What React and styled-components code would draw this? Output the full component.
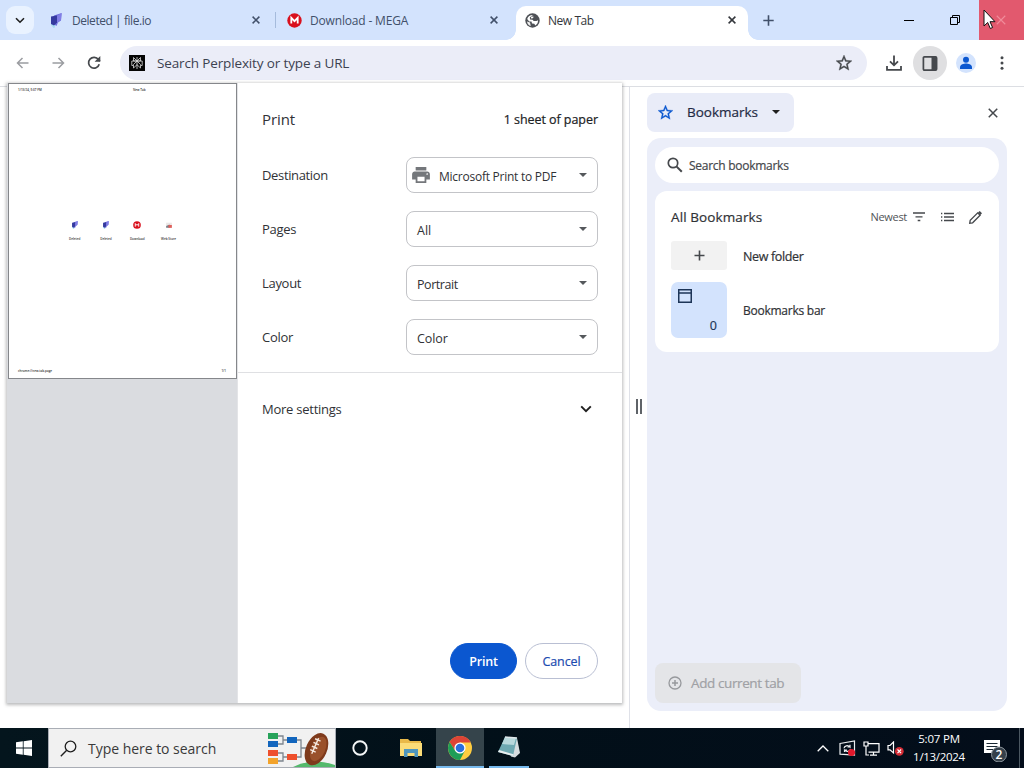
import React from "react";
import styled, { createGlobalStyle } from "styled-components";

const Global = createGlobalStyle`
  * { box-sizing: border-box; }
  html, body { margin: 0; padding: 0; overflow: hidden; }
  body { font-family: "Open Sans", "Noto Sans", sans-serif; font-size: 12px; color: #202124; }
  svg { display: block; flex: none; }
  button { font: inherit; border: 0; padding: 0; background: none; }
`;

const Desktop = styled.div`
  position: relative;
  width: 1024px;
  height: 768px;
  display: flex;
  flex-direction: column;
  background: #fff;
  overflow: hidden;
`;

const T = styled.span`
  white-space: nowrap;
  font-size: ${(p) => p.$size || 12.5}px;
  font-weight: ${(p) => p.$weight || 400};
  letter-spacing: ${(p) => p.$ls || 0}px;
  color: ${(p) => p.$color || "#303236"};
  line-height: 18px;
  padding-top: ${(p) => p.$drop || 0}px;
  ${(p) => p.$medium && "-webkit-text-stroke: 0.2px currentColor;"}
`;

/* ---------- tab strip ---------- */
const TabStrip = styled.div`
  height: 40px;
  flex: none;
  display: flex;
  background: #d3e3fd;
`;
const TabSearch = styled.button`
  width: 28px;
  height: 28px;
  margin: 6px 7px 0 6px;
  border-radius: 9px;
  background: #e9f2ff;
  display: grid;
  place-items: center;
`;
const Tab = styled.div`
  position: relative;
  width: ${(p) => p.$w}px;
  height: ${(p) => (p.$active ? 34 : 40)}px;
  margin-top: ${(p) => (p.$active ? 6 : 0)}px;
  padding: 0 ${(p) => p.$pr}px ${(p) => (p.$active ? 6 : 0)}px ${(p) => p.$pl}px;
  display: flex;
  align-items: center;
  gap: 8px;
  background: ${(p) => (p.$active ? "#fff" : "transparent")};
  border-radius: 10px 10px 0 0;
  ${(p) => p.$active && `
    &::before, &::after { content: ""; position: absolute; bottom: 0; width: 10px; height: 10px; }
    &::before { left: -10px; background: radial-gradient(circle at 0 0, transparent 9.5px, #fff 10px); }
    &::after { right: -10px; background: radial-gradient(circle at 100% 0, transparent 9.5px, #fff 10px); }
  `}
`;
const TabTitle = styled(T)`flex: 1;`;
const Separator = styled.div`
  width: 1px;
  height: 16px;
  margin-top: 12px;
  background: #a5bbdc;
`;
const NewTab = styled.button`
  width: 41px;
  height: 40px;
  display: grid;
  place-items: center;
`;
const WindowButtons = styled.div`
  margin-left: auto;
  display: flex;
`;
const WindowButton = styled.button`
  width: ${(p) => (p.$close ? 45 : 46)}px;
  height: 40px;
  padding-right: ${(p) => (p.$close ? 1 : 2)}px;
  display: grid;
  place-items: center;
  background: ${(p) => (p.$close ? "#e2596e" : "transparent")};
`;
const Cursor = styled.svg`
  position: absolute;
  left: 983px;
  top: 9px;
`;

/* ---------- toolbar ---------- */
const Toolbar = styled.div`
  height: 47px;
  flex: none;
  display: flex;
  align-items: flex-start;
  padding: 6px 4px 0 4px;
  border-bottom: 1px solid #dcdee3;
  background: #fff;
`;
const ToolButton = styled.button`
  width: ${(p) => p.$w || 36}px;
  height: 34px;
  margin-left: ${(p) => (p.$on ? 1 : 0)}px;
  display: grid;
  place-items: center;
  border-radius: 17px;
  background: ${(p) => (p.$on ? "#dfdfe1" : "transparent")};
`;
const Omnibox = styled.div`
  width: 747px;
  height: 34px;
  margin: 0 9px 0 8px;
  border-radius: 17px;
  background: #ebedf8;
  display: flex;
  align-items: center;
  padding: 0 15px 0 9px;
  gap: 12px;
`;

/* ---------- content ---------- */
const Content = styled.div`
  flex: 1;
  display: flex;
  min-height: 0;
`;
const PageArea = styled.div`width: 629px;`;
const SidePanel = styled.div`
  flex: 1;
  border-left: 1px solid #dfe1e8;
  display: flex;
`;
const ResizeHandle = styled.div`
  width: 17px;
  padding-top: 312px;
  display: flex;
  justify-content: center;
  gap: 2px;
  &::before, &::after { content: ""; width: 2px; height: 15px; background: #5f6368; }
`;
const SideColumn = styled.div`width: 360px;`;
const SideHeader = styled.div`
  height: 51px;
  padding-top: 6px;
  display: flex;
  justify-content: space-between;
  align-items: flex-start;
`;
const PanelPicker = styled.button`
  width: 147px;
  height: 39px;
  padding: 0 14px 1px 11px;
  border-radius: 8px;
  background: #e9ecf8;
  display: flex;
  align-items: center;
  justify-content: space-between;
`;
const CloseSide = styled.button`
  width: 28px;
  height: 39px;
  display: grid;
  place-items: center;
`;
const SideBody = styled.div`
  height: 573px;
  border-radius: 14px;
  background: #ebeef9;
  padding: 9px 8px 8px;
  display: flex;
  flex-direction: column;
`;
const SearchField = styled.div`
  height: 36px;
  border-radius: 18px;
  background: #fff;
  display: flex;
  align-items: center;
  gap: 6px;
  padding-left: 12px;
`;
const BookmarkCard = styled.div`
  margin-top: 8px;
  height: 161px;
  border-radius: 12px;
  background: #fff;
  padding: 11px 16px;
`;
const CardHeader = styled.div`
  display: flex;
  align-items: center;
  height: 30px;
`;
const SortGroup = styled.div`
  margin-left: auto;
  display: flex;
  align-items: center;
  gap: 4px;
`;
const ListIconGap = styled.div`margin-left: 10px;`;
const EditIconGap = styled.div`margin-left: 10px;`;
const BookmarkRow = styled.div`
  display: flex;
  align-items: center;
  gap: 16px;
  height: ${(p) => p.$h}px;
  margin-top: ${(p) => p.$mt}px;
`;
const NewFolderTile = styled.div`
  width: 56px;
  height: 29px;
  border-radius: 3px;
  background: #f2f2f2;
  display: grid;
  place-items: center;
`;
const FolderTile = styled.div`
  width: 56px;
  height: 56px;
  border-radius: 7px;
  background: #d3e3fd;
  padding: 6px 10px 3px 6px;
  display: flex;
  flex-direction: column;
  justify-content: space-between;
`;
const Count = styled(T)`align-self: flex-end;`;
const AddTab = styled.button`
  margin-top: auto;
  width: 146px;
  height: 40px;
  border-radius: 8px;
  background: #e4e5e8;
  display: flex;
  align-items: center;
  gap: 9px;
  padding-left: 13px;
`;

/* ---------- print dialog ---------- */
const Dialog = styled.div`
  position: absolute;
  left: 7px;
  top: 83px;
  width: 615px;
  height: 620px;
  display: flex;
  background: #fff;
  box-shadow: 0 1px 3px 1px rgba(60, 64, 67, 0.35);
`;
const Preview = styled.div`
  width: 231px;
  padding-left: 1px;
  background: #dadce0;
  border-right: 1px solid #e3e4e7;
`;
const Sheet = styled.div`
  width: 229px;
  height: 296px;
  background: #fff;
  border: 1px solid #85878b;
  padding: 3px 10px 4px 9px;
  display: flex;
  flex-direction: column;
  justify-content: space-between;
`;
const SheetLine = styled.div`
  display: flex;
  height: 6px;
  align-items: center;
`;
const Micro = styled.span`
  font-size: 3px;
  line-height: 5px;
  font-weight: 600;
  color: #333;
  white-space: nowrap;
  width: ${(p) => (p.$w ? p.$w + "px" : "auto")};
`;
const Shortcuts = styled.div`
  display: flex;
  padding: 2px 0 0 41px;
`;
const Shortcut = styled.div`
  width: 31.3px;
  display: flex;
  flex-direction: column;
  align-items: center;
  justify-content: space-between;
  height: 21px;
`;
const Settings = styled.div`
  flex: 1;
  display: flex;
  flex-direction: column;
`;
const DialogHeader = styled.div`
  height: 65px;
  padding: 7px 24px 0 24px;
  display: flex;
  align-items: center;
  justify-content: space-between;
`;
const SettingRow = styled.div`
  height: 54px;
  padding: 0 24px;
  display: flex;
  align-items: center;
  justify-content: space-between;
`;
const Select = styled.div`
  width: 192px;
  height: 36px;
  border: 1px solid #c3c4c8;
  border-radius: 8px;
  display: flex;
  align-items: center;
  padding: 2px 10px 0 ${(p) => (p.$icon ? 5 : 10)}px;
  gap: 9px;
`;
const SelectValue = styled(T)`flex: 1;`;
const ArrowSlot = styled.div`margin-bottom: 3px;`;
const IconSlot = styled.div`margin-bottom: 3px;`;
const MoreSettings = styled.div`
  margin-top: 8px;
  height: 75px;
  border-top: 1px solid #dfe0e3;
  padding: 0 30px 2px 24px;
  display: flex;
  align-items: center;
  justify-content: space-between;
`;
const Buttons = styled.div`
  margin-top: auto;
  padding: 0 24px 24px 0;
  display: flex;
  justify-content: flex-end;
  gap: 8px;
`;
const PillButton = styled.button`
  height: 36px;
  width: ${(p) => (p.$primary ? 67 : 73)}px;
  border-radius: 18px;
  border: 1px solid ${(p) => (p.$primary ? "#0b57d0" : "#b9bfd3")};
  background: ${(p) => (p.$primary ? "#0b57d0" : "#fff")};
  display: flex;
  align-items: center;
  justify-content: center;
`;

/* ---------- taskbar ---------- */
const Taskbar = styled.div`
  height: 40px;
  flex: none;
  display: flex;
  background: linear-gradient(90deg, #04151d 0%, #021019 45%, #030d1a 100%);
`;
const TaskItem = styled.div`
  width: 48px;
  height: 40px;
  margin-right: ${(p) => p.$mr || 0}px;
  display: grid;
  place-items: center;
  background: ${(p) => (p.$active ? "#35444b" : "transparent")};
  box-shadow: ${(p) => (p.$active ? "inset 0 -2px #76b9ed" : "none")};
`;
const RunningMark = styled.div`
  width: 40px;
  height: 40px;
  margin-left: 5px;
  border-bottom: 2px solid #76b9ed;
  display: grid;
  place-items: center;
`;
const TaskSearch = styled.div`
  width: 288px;
  height: 40px;
  background: #f1f1f1;
  border: 1px solid #a9adb5;
  display: flex;
  align-items: center;
  padding-left: 11px;
  gap: 11px;
`;
const SearchArt = styled.div`
  margin-left: auto;
  align-self: flex-end;
`;
const Tray = styled.div`
  margin-left: auto;
  display: flex;
  align-items: center;
`;
const TrayIcon = styled.div`
  width: 24px;
  display: grid;
  place-items: center;
`;
const Clock = styled.div`
  width: 64px;
  display: flex;
  flex-direction: column;
  align-items: center;
`;
const Notifications = styled(TaskItem)`padding-top: 4px;`;
const ShowDesktop = styled.div`
  width: 5px;
  height: 40px;
  border-left: 1px solid #4b5761;
`;

const CloseX = ({ c = "#41506a", s = 8, w = 1.5 }) => (
  <svg width={s} height={s} viewBox="0 0 8 8"><path d="M.6.6l6.8 6.8M7.4.6L.6 7.4" stroke={c} strokeWidth={w} /></svg>
);
const Chevron = ({ c = "#1f1f1f", w = 10 }) => (
  <svg width={w} height={w * 0.7} viewBox="0 0 10 7"><path d="M1 1.2l4 4 4-4" fill="none" stroke={c} strokeWidth="1.6" /></svg>
);
const Caret = ({ c = "#55585c", w = 8 }) => (
  <svg width={w} height={w / 2} viewBox="0 0 8 4"><path d="M0 0h8L4 4z" fill={c} /></svg>
);
const FileIo = ({ s = 15 }) => (
  <svg width={s} height={s} viewBox="0 0 15 15">
    <path d="M2 5l4-1v10.500L4.500 15 2 12z" fill="#a9dcf0" />
    <path d="M5 2.500L12.700 0 12 7.500 9 9.500 7.500 13 3 10z" fill="#6f70dc" />
    <path d="M2 3.500l6-1v7L5 12.500 2 11z" fill="#353a9f" />
    <path d="M8 3L12.500 0 12 6.500 8 10z" fill="#827ee6" />
  </svg>
);
const Mega = ({ s = 15 }) => (
  <svg width={s} height={s} viewBox="0 0 15 15">
    <circle cx="7.500" cy="7.500" r="7.200" fill="#d9101d" />
    <path d="M4.300 10.600V4.800l3.200 3.300 3.200-3.300v5.800" fill="none" stroke="#fff" strokeWidth="1.800" />
  </svg>
);
const Globe = () => (
  <svg width="15" height="15" viewBox="0 0 15 15">
    <circle cx="7.500" cy="7.500" r="7.200" fill="#4e5156" />
    <path d="M2.200 6C3 3.300 5 1.900 7.800 1.900L8.300 3 6.700 4.500H5V6.200L7.500 6.500 8.700 8H11.500L13 7.200C13.200 9.500 12 11.500 10.300 12.500L9.300 10.800 7 10.500 6.500 8.500H4.200z" fill="#fff" />
    <path d="M4.800 4.500L7.500 2.200 10.500 3 11.500 5.500 9 7.500 7.500 6.500 5 6.200z" fill="#4e5156" />
    <path d="M6.200 3.400l2.600.3-1 1.600-2 .2z" fill="#fff" />
    <path d="M2 8.500l3 1 .8 3.500C3.800 12.600 2.300 11 2 8.500z" fill="#f1f1f1" />
  </svg>
);
const Perplexity = () => (
  <svg width="16" height="16" viewBox="0 0 16 16">
    <rect width="16" height="16" fill="#050505" />
    <path d="M8 2v12M4.500 2.500L8 6l3.500-3.500V6h-7zM2.800 6h10.400v4.500h-1.700V13L8 9.700 4.500 13v-2.500H2.800zM8 6l-3.500 3.500v1M8 6l3.500 3.500v1" fill="none" stroke="#dcdcdc" strokeWidth=".8" />
  </svg>
);
const NavArrow = ({ flip }) => (
  <svg width="13" height="12" viewBox="0 0 13 12">
    <path transform={flip ? "translate(13 0) scale(-1 1)" : undefined} d="M12.500 6H1.500M6.500 1L1.500 6l5 5" fill="none" stroke="#9b9da1" strokeWidth="1.500" />
  </svg>
);
const Star = ({ c = "#45484c", s = 16, bold = 0.4 }) => (
  <svg width={s} height={s} viewBox="2 2 20 20">
    <path fill={c} stroke={c} strokeWidth={bold} d="M22 9.240l-7.190-.62L12 2 9.190 8.630 2 9.240l5.460 4.730L5.820 21 12 17.270 18.180 21l-1.630-7.030L22 9.240zM12 15.400l-3.760 2.270 1-4.280-3.320-2.880 4.380-.38L12 6.100l1.710 4.040 4.380.38-3.320 2.880 1 4.280L12 15.400z" />
  </svg>
);

const pageTiles = [
  ["Deleted", <FileIo s={8} />],
  ["Deleted", <FileIo s={8} />],
  ["Download", <Mega s={8} />],
  ["Web Store", <svg width="8" height="8" viewBox="0 0 7 7"><path d="M1 1.500h5V6H1z" fill="#ebe7e6" /><path d="M1 4.300l3-1.300v3H1z" fill="#7a818b" /><path d="M3 3.500h3V6H3z" fill="#e0605b" /></svg>],
];
const options = [
  ["Pages", "All", 0],
  ["Layout", "Portrait", -0.45],
  ["Color", "Color", -0.1],
];

function PrintDialog() {
  return (
    <Dialog>
      <Preview>
        <Sheet>
          <SheetLine><Micro $w={115}>1/13/24, 5:07 PM</Micro><Micro>New Tab</Micro></SheetLine>
          <Shortcuts>
            {pageTiles.map(([name, icon], i) => (
              <Shortcut key={i}>{icon}<Micro>{name}</Micro></Shortcut>
            ))}
          </Shortcuts>
          <SheetLine><Micro $w={205}>chrome://new-tab-page</Micro><Micro>1/1</Micro></SheetLine>
        </Sheet>
      </Preview>
      <Settings>
        <DialogHeader>
          <T $size={15} $ls={-0.1}>Print</T>
          <T $medium $ls={-0.05} $drop={1} $color="#202124">1 sheet of paper</T>
        </DialogHeader>
        <SettingRow>
          <T $size={13} $ls={-0.35}>Destination</T>
          <Select $icon>
            <IconSlot>
              <svg width="18" height="16" viewBox="2 3 20 18"><path fill="#74777b" d="M19 8H5c-1.660 0-3 1.340-3 3v6h4v4h12v-4h4v-6c0-1.660-1.340-3-3-3zm-3 11H8v-5h8v5zm3-7c-.55 0-1-.45-1-1s.45-1 1-1 1 .45 1 1-.45 1-1 1zm-1-9H6v4h12V3z" /></svg>
            </IconSlot>
            <SelectValue $size={12} $ls={-0.25} $drop={2}>Microsoft Print to PDF</SelectValue>
            <ArrowSlot><Caret /></ArrowSlot>
          </Select>
        </SettingRow>
        {options.map(([label, value, ls]) => (
          <SettingRow key={label}>
            <T $size={13} $ls={-0.3}>{label}</T>
            <Select>
              <SelectValue $ls={ls} $drop={2}>{value}</SelectValue>
              <ArrowSlot><Caret /></ArrowSlot>
            </Select>
          </SettingRow>
        ))}
        <MoreSettings>
          <T $size={13} $ls={-0.25}>More settings</T>
          <Chevron w={12} />
        </MoreSettings>
        <Buttons>
          <PillButton $primary><T $color="#fff" $drop={1} $weight={600} $ls={-0.2}>Print</T></PillButton>
          <PillButton><T $color="#1c4bb0" $drop={1} $medium $ls={-0.1}>Cancel</T></PillButton>
        </Buttons>
      </Settings>
    </Dialog>
  );
}

function BookmarksPanel() {
  return (
    <SidePanel>
      <ResizeHandle />
      <SideColumn>
        <SideHeader>
          <PanelPicker>
            <Star c="#0b57d0" s={15} />
            <T $size={13.5} $medium $color="#1f2a44">Bookmarks</T>
            <Caret c="#1f1f1f" />
          </PanelPicker>
          <CloseSide><CloseX c="#45484c" s={10} w={1.2} /></CloseSide>
        </SideHeader>
        <SideBody>
          <SearchField>
            <svg width="16" height="16" viewBox="0 0 16 16"><circle cx="6" cy="6" r="4.700" fill="none" stroke="#45484c" strokeWidth="1.700" /><path d="M9.400 9.400l5.400 5.400" stroke="#45484c" strokeWidth="2" /></svg>
            <T $size={12} $drop={2} $medium $ls={-0.27} $color="#45484c">Search bookmarks</T>
          </SearchField>
          <BookmarkCard>
            <CardHeader>
              <T $size={13.5} $medium $ls={0.1}>All Bookmarks</T>
              <SortGroup>
                <T $size={11} $ls={-0.3} $color="#505357">Newest</T>
                <svg width="16" height="10" viewBox="0 0 16 10"><path d="M2 1h12M4.500 4.800h7M6.700 8.500h2.600" stroke="#45484c" strokeWidth="1.300" /></svg>
                <ListIconGap>
                  <svg width="13" height="10" viewBox="0 0 13 10"><path d="M0 1.500h1.300M0 5h1.300M0 8.500h1.300M3 1.500h10M3 5h10M3 8.500h10" stroke="#45484c" strokeWidth="1.300" /></svg>
                </ListIconGap>
                <EditIconGap>
                  <svg width="15" height="15" viewBox="0 0 15 15"><path d="M1.700 13.300l.5-2.900 7.500-7.500 2.400 2.400-7.500 7.500z" fill="none" stroke="#45484c" strokeWidth="1.300" /><path d="M10 2.600L11.700 1 14 3.300l-1.600 1.700z" fill="#45484c" /></svg>
                </EditIconGap>
              </SortGroup>
            </CardHeader>
            <BookmarkRow $h={29} $mt={9}>
              <NewFolderTile>
                <svg width="11" height="11" viewBox="0 0 11 11"><path d="M5.500.5v10M.5 5.500h10" stroke="#45484c" strokeWidth="1.600" /></svg>
              </NewFolderTile>
              <T $size={12.5} $drop={2} $medium $ls={-0.35}>New folder</T>
            </BookmarkRow>
            <BookmarkRow $h={56} $mt={12}>
              <FolderTile>
                <svg width="16" height="16" viewBox="0 0 16 16"><path d="M1.750 1.750h12.500v12.500H1.750zM2 5h12" fill="none" stroke="#1d3557" strokeWidth="1.500" /></svg>
                <Count $size={12.5} $medium $color="#1d3557">0</Count>
              </FolderTile>
              <T $size={12} $drop={2} $medium $ls={-0.25}>Bookmarks bar</T>
            </BookmarkRow>
          </BookmarkCard>
          <AddTab>
            <svg width="14" height="14" viewBox="0 0 14 14"><circle cx="7" cy="7" r="6" fill="none" stroke="#97999d" strokeWidth="1.300" /><path d="M7 4v6M4 7h6" stroke="#97999d" strokeWidth="1.500" /></svg>
            <T $size={13.5} $medium $ls={-0.4} $color="#9fa1a5">Add current tab</T>
          </AddTab>
        </SideBody>
      </SideColumn>
    </SidePanel>
  );
}

function WindowsTaskbar() {
  return (
    <Taskbar>
      <TaskItem>
        <svg width="16" height="16" viewBox="0 0 16 16"><path d="M0 2.200L6.800 1.300v6.300H0zM7.600 1.200L16 0v7.600H7.600zM0 8.400h6.800v6.300L0 13.800zM7.600 8.400H16V16l-8.400-1.200z" fill="#fff" /></svg>
      </TaskItem>
      <TaskSearch>
        <svg width="17" height="17" viewBox="0 0 17 17"><circle cx="10.500" cy="6.500" r="5.300" fill="none" stroke="#1f1f1f" strokeWidth="1.300" /><path d="M6.700 10.300L.8 16.200" stroke="#1f1f1f" strokeWidth="1.400" /></svg>
        <T $size={14} $ls={-0.03} $drop={2} $color="#3a3a3a">Type here to search</T>
        <SearchArt>
          <svg width="68" height="38" viewBox="0 0 68 38">
            <path d="M26 38Q46 28 68 36v2z" fill="#54b96c" />
            <path d="M11 7h5v8h-5M16 11h5M11 24h5v8h-5M16 28h5M30 11h4v17h-4M34 19h7" fill="none" stroke="#7d858e" strokeWidth="1.300" />
            <path d="M1 4h10v6H1z" fill="#27a35a" />
            <path d="M1 12h10v6H1zM20 8h10v6H20z" fill="#1265bd" />
            <path d="M1 21h10v6H1zM20 25h10v6H20z" fill="#ee4f2c" />
            <path d="M1 29h10v6H1z" fill="#f3a32b" />
            <g transform="rotate(24 49 20)">
              <ellipse cx="49.500" cy="20" rx="10.500" ry="17" fill="#7e3a1c" />
              <ellipse cx="51" cy="19" rx="7" ry="13" fill="#9a512b" />
              <path d="M47 9v17M44 11h6M44 15h6M44 19h6M44 23h6" stroke="#f4e8df" strokeWidth="1.400" />
            </g>
          </svg>
        </SearchArt>
      </TaskSearch>
      <TaskItem $mr={3}>
        <svg width="16" height="16" viewBox="0 0 16 16"><circle cx="8" cy="8" r="6.700" fill="none" stroke="#f4f6f7" strokeWidth="1.900" /></svg>
      </TaskItem>
      <TaskItem $mr={1}>
        <svg width="22" height="20" viewBox="0 0 22 20">
          <path d="M0 1h8l2 2h11v15H0z" fill="#e9b949" />
          <path d="M0 5h22v13H0z" fill="#fbdc78" />
          <path d="M4 11h14v8h-3.500v-4h-7v4H4z" fill="#4f96bd" />
        </svg>
      </TaskItem>
      <TaskItem $active>
        <svg width="24" height="24" viewBox="0 0 24 24">
          <circle cx="12" cy="12" r="12" fill="#ffcd40" />
          <path d="M12 6.500h10.700A12 12 0 0 0 1.610 6L7.200 14.700z" fill="#dd4436" />
          <path d="M1.610 6A12 12 0 0 0 12 24l4.800-9.300L12 17.500l-4.800-2.800z" fill="#1e9d58" />
          <circle cx="12" cy="12" r="5.600" fill="#fff" />
          <circle cx="12" cy="12" r="4.300" fill="#2a6fde" />
        </svg>
      </TaskItem>
      <RunningMark>
        <svg width="23" height="22" viewBox="0 0 23 22">
          <path d="M7 1l12 1 3 15-5 4.500-4-1z" fill="#d7dde0" />
          <path d="M7 1l12 1-4 18L0 16z" fill="#6fa9b2" />
          <path d="M7 1l11 1-2 7-12-1z" fill="#b9d8dc" />
          <path d="M0 16l15 4 .5-1.700L1 14z" fill="#e9eef0" />
          <path d="M7 1l12 1" stroke="#dfe7ea" strokeWidth="1.500" />
        </svg>
      </RunningMark>
      <Tray>
        <TrayIcon><svg width="12" height="7" viewBox="0 0 12 7"><path d="M.7 6.300L6 1l5.300 5.300" fill="none" stroke="#fff" strokeWidth="1.300" /></svg></TrayIcon>
        <TrayIcon>
          <svg width="17" height="17" viewBox="0 0 17 17">
            <path d="M1 3.500L15.500 1v14L1 14.200z" fill="none" stroke="#eceff1" strokeWidth="1.200" />
            <path d="M5 8.300c.3-2.600 4-3.600 6-1.300V4.800M11 7H8.500M11.500 9c-.5 2.600-4 3.300-6 1.200V12M5.500 10H8" fill="none" stroke="#eceff1" strokeWidth="1.200" />
            <circle cx="12.500" cy="12.500" r="3.600" fill="#e2192c" />
          </svg>
        </TrayIcon>
        <TrayIcon>
          <svg width="17" height="15" viewBox="0 0 17 15"><path d="M5 2.700h11v8.500H5.500M10.500 11.200v3M7 14.200h7M1 1h4v4H1zM3 5v9h3" fill="none" stroke="#fff" strokeWidth="1.200" /></svg>
        </TrayIcon>
        <TrayIcon>
          <svg width="17" height="15" viewBox="0 0 17 15">
            <path d="M1 4.500h2L6.500 1v11L3 8.800H1z" fill="none" stroke="#fff" strokeWidth="1.200" />
            <circle cx="12.300" cy="10.300" r="4.400" fill="#d42c35" />
            <path d="M10.500 8.500l3.600 3.600M14.100 8.500l-3.600 3.600" stroke="#fff" strokeWidth="1.100" />
          </svg>
        </TrayIcon>
        <Clock>
          <T $size={11.5} $color="#fff" $ls={-0.2}>5:07 PM</T>
          <T $size={11.5} $color="#fff" $ls={-0.3}>1/13/2024</T>
        </Clock>
        <Notifications>
          <svg width="24" height="24" viewBox="0 0 24 24">
            <path d="M1 2h16v13h-4l-3 3v-3H1z" fill="#fff" />
            <path d="M3.500 5.500h11M3.500 8.500h11M3.500 11.500h7" stroke="#1a2833" strokeWidth="1.100" />
            <circle cx="16" cy="16.500" r="7.500" fill="#35404a" stroke="#8d969d" />
            <text x="16" y="21" textAnchor="middle" fill="#fff" fontSize="12" fontWeight="600">2</text>
          </svg>
        </Notifications>
        <ShowDesktop />
      </Tray>
    </Taskbar>
  );
}

export default function App() {
  return (
    <Desktop>
      <Global />
      <TabStrip>
        <TabSearch><Chevron /></TabSearch>
        <Tab $w={234} $pl={8} $pr={15}>
          <FileIo />
          <TabTitle $color="#41506a" $size={12} $drop={2} $ls={-0.45}>Deleted | file.io</TabTitle>
          <CloseX />
        </Tab>
        <Separator />
        <Tab $w={240} $pl={11} $pr={18}>
          <Mega />
          <TabTitle $color="#41506a" $size={12} $drop={2} $ls={-0.17}>Download - MEGA</TabTitle>
          <CloseX />
        </Tab>
        <Tab $active $w={232} $pl={9} $pr={12}>
          <Globe />
          <TabTitle $color="#34373c" $size={12} $drop={2} $ls={-0.45}>New Tab</TabTitle>
          <CloseX c="#34373c" />
        </Tab>
        <NewTab>
          <svg width="11" height="11" viewBox="0 0 11 11"><path d="M5.500.3v10.400M.3 5.500h10.400" stroke="#41506a" strokeWidth="1.600" /></svg>
        </NewTab>
        <WindowButtons>
          <WindowButton><svg width="10" height="1" viewBox="0 0 10 1"><path d="M0 .5h10" stroke="#000" /></svg></WindowButton>
          <WindowButton><svg width="10" height="10" viewBox="0 0 10 10"><path d="M.5 2.500h7v7h-7zM2.500 2.500v-2h7v7h-2" fill="none" stroke="#000" /></svg></WindowButton>
          <WindowButton $close><CloseX c="#f08c9b" s={10} w={0.9} /></WindowButton>
        </WindowButtons>
      </TabStrip>
      <Toolbar>
        <ToolButton><NavArrow /></ToolButton>
        <ToolButton><NavArrow flip /></ToolButton>
        <ToolButton>
          <svg width="14" height="14" viewBox="0 0 14 14"><path d="M12.200 8.200A5.400 5.400 0 1 1 11.400 3.600L13 5" fill="none" stroke="#45484c" strokeWidth="1.700" /><path d="M13.300 0v5.700H7.600z" fill="#45484c" /></svg>
        </ToolButton>
        <Omnibox>
          <Perplexity />
          <TabTitle $size={13.5} $ls={-0.14} $color="#3c4250">Search Perplexity or type a URL</TabTitle>
          <Star />
        </Omnibox>
        <ToolButton>
          <svg width="16" height="16" viewBox="0 0 16 16"><path d="M8 .5v9.500M4 6.300l4 4 4-4M1 11v3.800h14V11" fill="none" stroke="#45484c" strokeWidth="1.800" /></svg>
        </ToolButton>
        <ToolButton $on $w={34}>
          <svg width="16" height="15" viewBox="0 0 15 15"><rect x=".9" y=".9" width="13.200" height="13.200" rx="1" fill="none" stroke="#45484c" strokeWidth="1.700" /><path d="M9 1h5v13H9z" fill="#45484c" /></svg>
        </ToolButton>
        <ToolButton $w={38}>
          <svg width="20" height="20" viewBox="0 0 20 20"><circle cx="10" cy="10" r="10" fill="#d3e3fd" /><circle cx="10" cy="6.800" r="3" fill="#0b57d0" /><path d="M4 16v-1.800c0-2.600 4-3.600 6-3.600s6 1 6 3.600V16z" fill="#0b57d0" /></svg>
        </ToolButton>
        <ToolButton $w={34}>
          <svg width="4" height="14" viewBox="0 0 4 14"><g fill="#45484c"><circle cx="2" cy="1.700" r="1.500" /><circle cx="2" cy="7" r="1.500" /><circle cx="2" cy="12.300" r="1.500" /></g></svg>
        </ToolButton>
      </Toolbar>
      <Content>
        <PageArea />
        <BookmarksPanel />
      </Content>
      <WindowsTaskbar />
      <PrintDialog />
      <Cursor width="13" height="21" viewBox="0 0 13 21">
        <path d="M1 1v16l3.700-3.500 2.600 6 2.300-1-2.600-5.800h5z" fill="#fff" stroke="#111" />
      </Cursor>
    </Desktop>
  );
}
